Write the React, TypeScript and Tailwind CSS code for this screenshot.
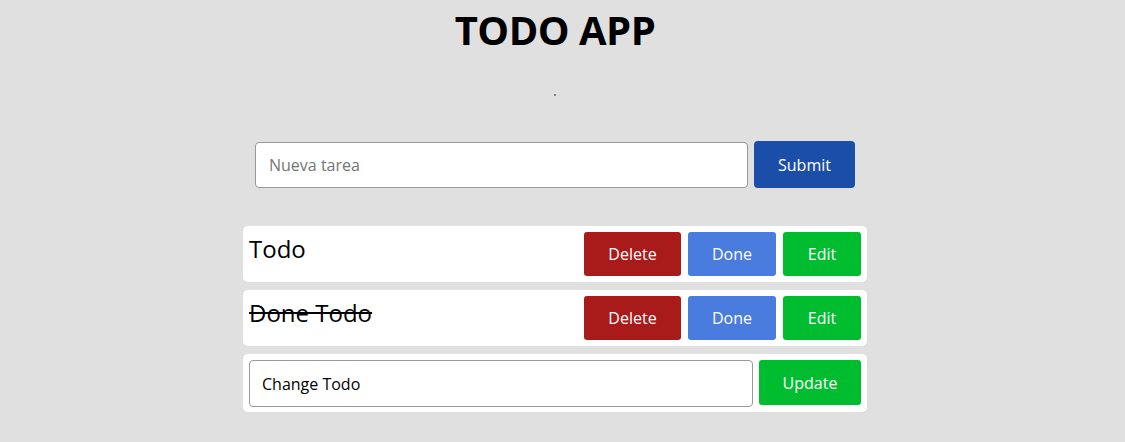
import React from 'react';

const font = { fontFamily: '"Open Sans", "Noto Sans", sans-serif' };

export default function App() {
  return (
    <div className="min-h-[442px] w-full bg-[#e0e0e0] text-black" style={font}>
      <div className="w-[1110px] flex flex-col items-center">
        <h1 className="mt-[4px] text-[40px] font-bold leading-[52px] tracking-[-0.5px]">TODO APP</h1>

        {/* separator dot */}
        <div className="mt-[38px] h-[2px] w-[2px] rounded-full bg-[#666]" />

        {/* new todo form */}
        <form className="mt-[45px] flex items-center gap-[6px]" onSubmit={(e) => e.preventDefault()}>
          <input
            type="text"
            placeholder="Nueva tarea"
            className="h-[46px] w-[493px] rounded-[4px] border border-[#999] bg-white px-[13px] text-[16px] placeholder:text-[#757575] outline-none"
          />
          <button className="h-[47px] w-[101px] rounded-[4px] bg-[#1b4ea8] text-[16px] text-white">Submit</button>
        </form>

        {/* list */}
        <div className="mt-[38px] flex w-[624px] flex-col gap-[8px]">
          <div className="flex h-[56px] items-start justify-between rounded-[5px] bg-white p-[6px]">
            <span className="text-[24px] leading-[34px]">Todo</span>
            <div className="flex gap-[7px]">
              <button className="h-[44px] w-[97px] rounded-[3px] bg-[#a91b1b] text-[16px] text-white">Delete</button>
              <button className="h-[44px] w-[88px] rounded-[3px] bg-[#4a7cdf] text-[16px] text-white">Done</button>
              <button className="h-[44px] w-[78px] rounded-[3px] bg-[#00bd30] text-[16px] text-white">Edit</button>
            </div>
          </div>

          <div className="flex h-[56px] items-start justify-between rounded-[5px] bg-white p-[6px]">
            <span className="text-[24px] leading-[34px] line-through">Done Todo</span>
            <div className="flex gap-[7px]">
              <button className="h-[44px] w-[97px] rounded-[3px] bg-[#a91b1b] text-[16px] text-white">Delete</button>
              <button className="h-[44px] w-[88px] rounded-[3px] bg-[#4a7cdf] text-[16px] text-white">Done</button>
              <button className="h-[44px] w-[78px] rounded-[3px] bg-[#00bd30] text-[16px] text-white">Edit</button>
            </div>
          </div>

          <div className="flex h-[58px] items-start justify-between rounded-[5px] bg-white p-[6px]">
            <input
              type="text"
              defaultValue="Change Todo"
              className="h-[47px] w-[504px] rounded-[4px] border border-[#999] bg-white px-[12px] text-[16px] outline-none"
            />
            <button className="h-[45px] w-[102px] rounded-[3px] bg-[#00bd30] text-[16px] text-white">Update</button>
          </div>
        </div>
      </div>
    </div>
  );
}
